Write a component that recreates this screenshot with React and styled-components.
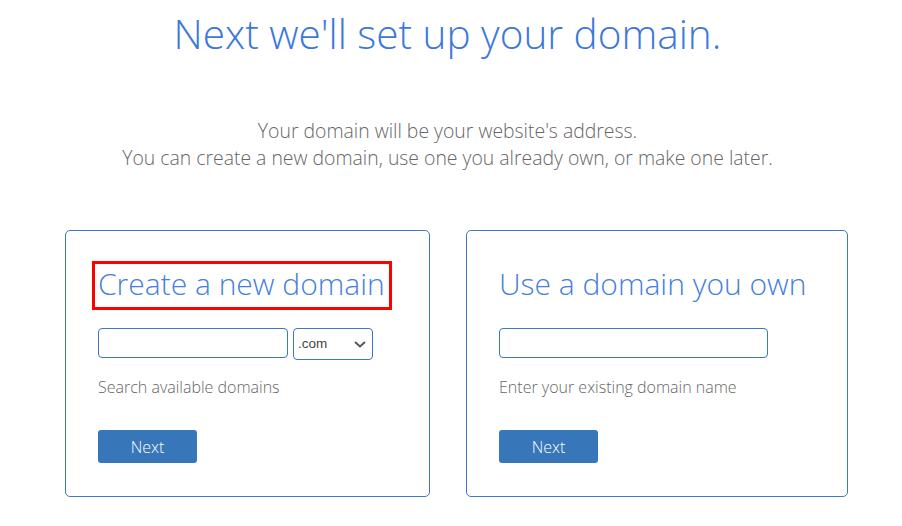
import React from "react";
import styled, { createGlobalStyle } from "styled-components";

const GlobalStyle = createGlobalStyle`
  body {
    margin: 0;
    background: #fff;
    font-family: "Open Sans", "Liberation Sans", sans-serif;
  }
`;

const Page = styled.div`
  width: 902px;
  height: 526px;
  overflow: hidden;
  padding-top: 10px;
  box-sizing: border-box;
`;

const Header = styled.header`
  text-align: center;
  padding-right: 7px;
`;

const Title = styled.h1`
  margin: 0;
  font-size: 40.5px;
  line-height: 48px;
  font-weight: 300;
  color: #3c78dc;
`;

const Lead = styled.p`
  margin: 59px 0 0;
  font-size: 19.4px;
  line-height: 27px;
  font-weight: 300;
  color: #666;
`;

const Cards = styled.div`
  display: flex;
  gap: 36px;
  padding-left: 65px;
  margin-top: 59px;
`;

const Card = styled.section`
  width: ${(p) => p.$width}px;
  height: 267px;
  box-sizing: border-box;
  border: 1px solid #3b78c8;
  border-radius: 5px;
  padding: 33px 32px 0;
  display: flex;
  flex-direction: column;
  align-items: flex-start;
`;

const CardTitle = styled.h2`
  margin: 0 0 0 -3px;
  padding: 0 4px 3px 3px;
  font-size: 30px;
  line-height: 40px;
  font-weight: 300;
  color: #4680dc;
  outline: ${(p) => (p.$marked ? "3.5px solid #ff0000" : "none")};
`;

const Row = styled.div`
  display: flex;
  align-items: flex-start;
  gap: 5px;
  min-height: 32px;
  margin-top: 21px;
`;

const TextInput = styled.input`
  width: ${(p) => p.$width}px;
  height: 30px;
  box-sizing: border-box;
  border: 1px solid #3b78c8;
  border-radius: 4px;
  background: #fff;
  padding: 0 8px;
  font-size: 14px;
  outline: none;
`;

const SelectWrap = styled.div`
  position: relative;
  width: 80px;
  height: 32px;
`;

const Select = styled.select`
  appearance: none;
  width: 100%;
  height: 100%;
  box-sizing: border-box;
  border: 1px solid #3b78c8;
  border-radius: 4px;
  background: #fff;
  padding: 0 0 2px 4px;
  font-family: "Liberation Sans", Arial, sans-serif;
  font-size: 13.5px;
  color: #444;
  outline: none;
`;

const Chevron = styled.svg`
  position: absolute;
  right: 7px;
  top: 13px;
  pointer-events: none;
`;

const Hint = styled.p`
  margin: 15px 0 0;
  font-size: 16px;
  line-height: 24px;
  font-weight: 300;
  color: #666;
`;

const NextButton = styled.button`
  margin-top: 31px;
  width: 99px;
  height: 33px;
  border: none;
  border-radius: 3px;
  background: #3776b9;
  color: #fff;
  font-family: "Open Sans", "Liberation Sans", sans-serif;
  font-size: 16px;
  font-weight: 300;
  cursor: pointer;
`;

export default function App() {
  return (
    <Page>
      <GlobalStyle />
      <Header>
        <Title>Next we'll set up your domain.</Title>
        <Lead>
          Your domain will be your website's address.
          <br />
          You can create a new domain, use one you already own, or make one later.
        </Lead>
      </Header>
      <Cards>
        <Card $width={365}>
          <CardTitle $marked>Create a new domain</CardTitle>
          <Row>
            <TextInput type="text" $width={190} />
            <SelectWrap>
              <Select defaultValue=".com">
                <option>.com</option>
                <option>.net</option>
                <option>.org</option>
              </Select>
              <Chevron width="12" height="7" viewBox="0 0 12 7">
                <path d="M1 1l5 4.5L11 1" fill="none" stroke="#555" strokeWidth="2" />
              </Chevron>
            </SelectWrap>
          </Row>
          <Hint>Search available domains</Hint>
          <NextButton>Next</NextButton>
        </Card>
        <Card $width={382}>
          <CardTitle>Use a domain you own</CardTitle>
          <Row>
            <TextInput type="text" $width={269} />
          </Row>
          <Hint>Enter your existing domain name</Hint>
          <NextButton>Next</NextButton>
        </Card>
      </Cards>
    </Page>
  );
}
